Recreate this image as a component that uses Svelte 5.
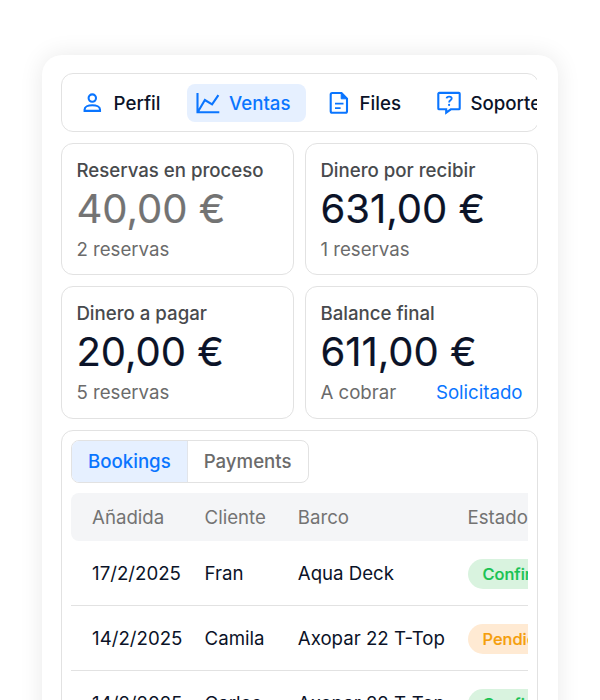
<script>
  const tabs = [
    { id: 'perfil', label: 'Perfil' },
    { id: 'ventas', label: 'Ventas' },
    { id: 'files', label: 'Files' },
    { id: 'soporte', label: 'Soporte' },
  ];
  const stats = [
    { title: 'Reservas en proceso', amount: '40,00 €', note: '2 reservas', muted: true },
    { title: 'Dinero por recibir', amount: '631,00 €', note: '1 reservas' },
    { title: 'Dinero a pagar', amount: '20,00 €', note: '5 reservas' },
    { title: 'Balance final', amount: '611,00 €', note: 'A cobrar', action: 'Solicitado' },
  ];
  const bookings = [
    { date: '17/2/2025', client: 'Fran', boat: 'Aqua Deck', status: 'Confirmada', kind: 'ok' },
    { date: '14/2/2025', client: 'Camila', boat: 'Axopar 22 T-Top', status: 'Pendiente', kind: 'wait' },
    { date: '14/2/2025', client: 'Carlos', boat: 'Axopar 22 T-Top', status: 'Confirmada', kind: 'ok' },
  ];
  let active = $state('ventas');
  let view = $state('Bookings');
</script>

<div class="page">
  <main class="panel">
    <nav class="tabs">
      {#each tabs as tab}
        <button class="tab {tab.id}" class:active={active === tab.id} onclick={() => (active = tab.id)}>
          <svg width="24" height="24" viewBox="0 0 24 24" fill="none" stroke="currentColor" stroke-width="2.1">
            {#if tab.id === 'perfil'}
              <circle cx="12.3" cy="7.1" r="3.7" />
              <path d="M4.6 19.9v-1.4c0-2.6 3.4-4.2 7.7-4.2s7.7 1.6 7.7 4.2v1.4z" />
            {:else if tab.id === 'ventas'}
              <path d="M1.5 2v19.2h21.8M2.1 20.5 8.9 9l7.2 4.4 6.3-9.2" />
            {:else if tab.id === 'files'}
              <path d="M5.2 2h9.3L20 7.7v12.6a1.5 1.5 0 0 1-1.5 1.5H5.2a1.5 1.5 0 0 1-1.5-1.5V3.5A1.5 1.5 0 0 1 5.2 2z" />
              <path d="M14.2 2.4v5.4H20z" fill="currentColor" stroke-width="1" />
              <path d="M8 12.6h8.5M8 17.1h5.6" stroke-width="1.7" />
            {:else}
              <path d="M2.2 1.9h19.6a.9.9 0 0 1 .9.9v14.6a.9.9 0 0 1-.9.9h-8L9.2 21.7v-3.4h-7a.9.9 0 0 1-.9-.9V2.8a.9.9 0 0 1 .9-.9z" />
              <path d="M9.6 7.4c.2-2.5 5.1-2.4 5.1.1 0 1.9-2.6 1.8-2.6 3.9" stroke-width="1.8" />
              <circle cx="12.1" cy="13.9" r="1.1" fill="currentColor" stroke="none" />
            {/if}
          </svg>
          <span>{tab.label}</span>
        </button>
      {/each}
    </nav>

    <section class="stats">
      {#each stats as s}
        <article class="card">
          <h3>{s.title}</h3>
          <div class="amount" class:muted={s.muted}>{s.amount}</div>
          <div class="note">
            <span>{s.note}</span>
            {#if s.action}<span class="action">{s.action}</span>{/if}
          </div>
        </article>
      {/each}
    </section>

    <section class="list">
      <div class="segmented">
        {#each ['Bookings', 'Payments'] as name}
          <button class:selected={view === name} onclick={() => (view = name)}>{name}</button>
        {/each}
      </div>
      <div class="table">
        <div class="row head">
          <span>Añadida</span><span>Cliente</span><span>Barco</span><span>Estado</span>
        </div>
        {#each bookings as b}
          <div class="row">
            <span>{b.date}</span><span>{b.client}</span><span>{b.boat}</span>
            <span class="badge {b.kind}">{b.status}</span>
          </div>
        {/each}
      </div>
    </section>
  </main>
</div>

<style>
  :global(body) {
    margin: 0;
    background: #fff;
  }
  .page {
    box-sizing: border-box;
    width: 600px;
    height: 700px;
    padding: 55px 42px 0;
    overflow: hidden;
    font-family: Inter, sans-serif;
    font-size: 18.65px;
    color: #0b1328;
  }
  .panel {
    box-sizing: border-box;
    width: 516px;
    height: 720px;
    padding: 18px 19px 0;
    border-radius: 20px;
    background: #fff;
    box-shadow: 0 0 24px rgba(0, 0, 0, 0.09);
  }
  button {
    font: inherit;
    color: inherit;
    border: 0;
    background: none;
    cursor: pointer;
  }
  .tabs {
    box-sizing: border-box;
    width: 478px;
    height: 59px;
    display: flex;
    align-items: center;
    padding: 0 0 0 9px;
    gap: 12px;
    border: 1px solid #e2e2e2;
    border-radius: 12px;
    overflow: hidden;
    clip-path: inset(0 2px 0 0);
  }
  .tab {
    flex: none;
    display: flex;
    align-items: center;
    gap: 9px;
    height: 38px;
    padding: 0 15.5px 0 9px;
    border-radius: 8px;
    font-weight: 500;
  }
  .tab span {
    padding-top: 1px;
  }
  .perfil {
    gap: 9.6px;
    padding-right: 14.6px;
  }
  .files {
    padding-left: 8.6px;
  }
  .tab svg {
    color: #0a75ff;
  }
  .tab.active {
    color: #0a75ff;
    background: #e6f0ff;
  }
  .stats {
    display: grid;
    grid-template-columns: 233px 233px;
    gap: 11px;
    margin-top: 11px;
  }
  .card {
    box-sizing: border-box;
    height: 132.4px;
    padding: 14px 14.5px 0 14.4px;
    border: 1px solid #e2e2e2;
    border-radius: 12px;
  }
  h3 {
    margin: 0;
    font-size: 18.65px;
    line-height: 24px;
    font-weight: 500;
    color: #484a4d;
  }
  .amount {
    margin-top: -1px;
    font-size: 40px;
    line-height: 55px;
    -webkit-text-stroke: 0.2px currentColor;
    white-space: nowrap;
  }
  .amount.muted {
    color: #737373;
  }
  .note {
    display: flex;
    justify-content: space-between;
    margin-top: 1px;
    line-height: 24px;
    color: #6b6b6b;
  }
  .action {
    color: #0a75ff;
  }
  .list {
    box-sizing: border-box;
    width: 477px;
    height: 320px;
    margin-top: 11px;
    padding: 9px 9px 0;
    border: 1px solid #e2e2e2;
    border-radius: 12px;
  }
  .segmented {
    box-sizing: border-box;
    display: flex;
    width: 238px;
    height: 43px;
    border: 1.5px solid #e2e2e2;
    border-radius: 8px;
    overflow: hidden;
  }
  .segmented button {
    padding: 0 16px;
    font-weight: 500;
    color: #6b6b6b;
  }
  .segmented button + button {
    border-left: 1px solid #e2e5ea;
  }
  .segmented .selected {
    color: #0a75ff;
    background: #e6f0ff;
  }
  .table {
    width: 457px;
    margin-top: 10px;
    overflow: hidden;
  }
  .row {
    box-sizing: border-box;
    display: grid;
    grid-template-columns: 112.5px 93.2px 169.8px 150px;
    align-items: center;
    width: 560px;
    height: 65px;
    padding-left: 21.1px;
    border-bottom: 1px solid #e2e2e2;
    white-space: nowrap;
  }
  .row.head {
    height: 48px;
    border: 0;
    border-radius: 8px;
    color: #737373;
    background: #f4f5f7;
  }
  .badge {
    box-sizing: border-box;
    justify-self: start;
    height: 30px;
    margin-top: 2.5px;
    padding: 0 15px;
    border-radius: 15px;
    font-size: 16.4px;
    line-height: 30px;
    font-weight: 500;
    -webkit-text-stroke: 0.2px currentColor;
  }
  .ok {
    color: #18c252;
    background: #d9f3df;
  }
  .wait {
    color: #f59e0b;
    background: #ffead3;
  }
</style>
